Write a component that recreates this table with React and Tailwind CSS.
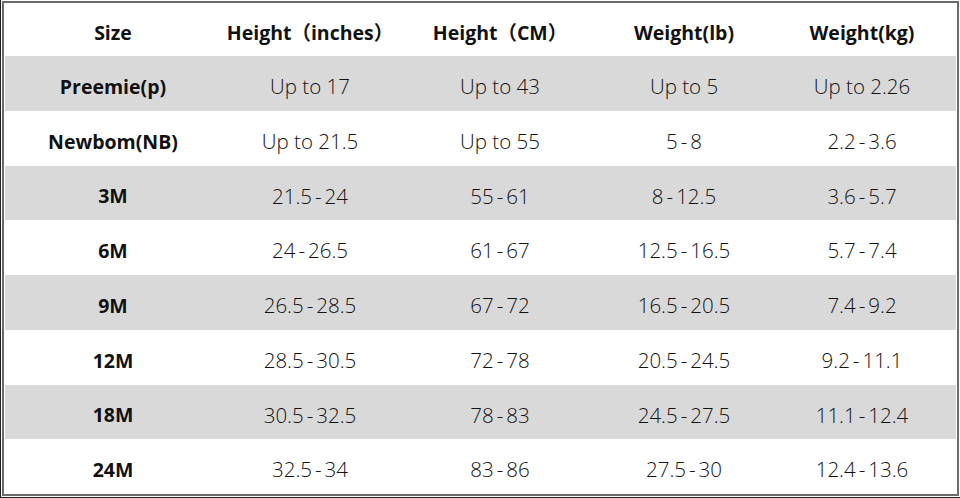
import React from 'react';

const headers = ['Size', 'Height（inches）', 'Height（CM）', 'Weight(lb)', 'Weight(kg)'];

const rows = [
  ['Preemie(p)', 'Up to 17', 'Up to 43', 'Up to 5', 'Up to 2.26'],
  ['Newbom(NB)', 'Up to 21.5', 'Up to 55', '5-8', '2.2-3.6'],
  ['3M', '21.5-24', '55-61', '8-12.5', '3.6-5.7'],
  ['6M', '24-26.5', '61-67', '12.5-16.5', '5.7-7.4'],
  ['9M', '26.5-28.5', '67-72', '16.5-20.5', '7.4-9.2'],
  ['12M', '28.5-30.5', '72-78', '20.5-24.5', '9.2-11.1'],
  ['18M', '30.5-32.5', '78-83', '24.5-27.5', '11.1-12.4'],
  ['24M', '32.5-34', '83-86', '27.5-30', '12.4-13.6'],
];

const cols = 'grid grid-cols-[216px_178px_202px_166px_190px]';

// hyphen in the source font is wider, pad it a little
const Cell = ({ text }) => {
  const parts = text.split('-');
  if (parts.length === 1) return text;
  return (
    <>
      {parts[0]}
      <span className="mx-[3px]">-</span>
      {parts[1]}
    </>
  );
};

const App = () => {
  return (
    <div
      className="w-[960px] h-[498px] bg-white border-l border-b border-[#222] pt-px pb-px"
      style={{ fontFamily: '"Open Sans", "Liberation Sans", "Noto Sans CJK SC", sans-serif' }}
    >
      <div className="h-full ml-px mr-px border-2 border-[#6b6b6b] px-[1px] flex flex-col text-[#111]">
        {/* Header */}
        <div className={`${cols} h-[53px] items-center text-[19.5px] font-bold`}>
          {headers.map((h) => (
            <div key={h} className="text-center pt-[6px]">
              {h}
            </div>
          ))}
        </div>

        {/* Rows */}
        {rows.map((row, i) => (
          <div
            key={row[0]}
            className={`${cols} flex-1 items-center ${i % 2 === 0 ? 'bg-[#d9d9d9]' : 'bg-white'}`}
          >
            {row.map((cell, j) => (
              <div
                key={j}
                className={
                  j === 0
                    ? 'text-center pt-[6px] text-[19.5px] font-bold'
                    : 'text-center pt-[6px] text-[20.5px] font-light'
                }
              >
                <Cell text={cell} />
              </div>
            ))}
          </div>
        ))}
      </div>
    </div>
  );
};

export default App;
